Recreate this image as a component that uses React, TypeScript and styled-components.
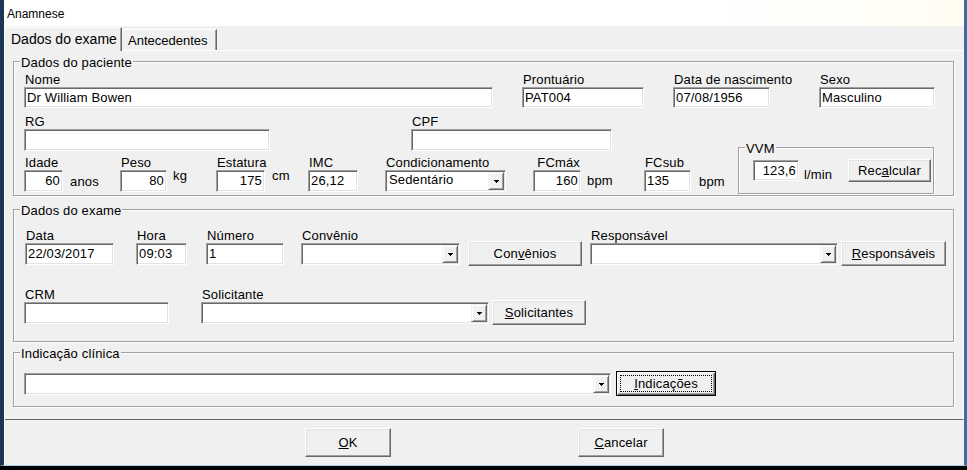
import styled, { createGlobalStyle } from 'styled-components';

const GlobalStyle = createGlobalStyle`
  html, body {
    margin: 0;
    padding: 0;
    background: #000;
  }
  * {
    box-sizing: border-box;
  }
`;

const Screen = styled.div`
  width: 967px;
  height: 470px;
  overflow: hidden;
  background: #000;
  font-family: 'Liberation Sans', Arial, sans-serif;
  font-size: 13px;
  letter-spacing: 0.15px;
  color: #000;
`;

const Window = styled.div`
  display: flex;
  flex-direction: column;
  width: 967px;
  height: 466px;
  background: #f0f0f0;
  border-left: 4px solid #1b3757;
  border-right: 3px solid #3a6da2;
  border-bottom: 1px solid #a6cbe9;
`;

const TitleBar = styled.div`
  flex: none;
  height: 26px;
  padding: 7px 0 0 3px;
  background: linear-gradient(90deg, #fff 75%, #fffdf2);
  font-size: 12px;
  line-height: 14px;
  letter-spacing: 0;
`;

const Body = styled.div`
  flex: 1;
  display: flex;
  flex-direction: column;
  border-left: 1px solid #fff;
`;

const TabStrip = styled.div`
  position: relative;
  z-index: 1;
  display: flex;
  align-items: flex-end;
  height: 23px;
  margin-top: 1px;
`;

interface TabProps {
  $active?: boolean;
  $w: number;
}

const Tab = styled.div<TabProps>`
  width: ${({ $w }) => $w}px;
  height: ${({ $active }) => ($active ? 24 : 21)}px;
  margin-bottom: ${({ $active }) => ($active ? -1 : 0)}px;
  padding: 3px 0 0 6px;
  font-size: ${({ $active }) => ($active ? 14 : 13)}px;
  line-height: ${({ $active }) => ($active ? 16 : 15)}px;
  letter-spacing: 0;
  white-space: nowrap;
  background: #f0f0f0;
  border-top: 1px solid #fff;
  border-right: 1px solid #696969;
  box-shadow: inset -1px 0 0 #a0a0a0;
`;

const TabPage = styled.div`
  flex: none;
  display: flex;
  flex-direction: column;
  height: 370px;
  padding: 10px 9px 0 8px;
  border-top: 1px solid #fff;
  border-right: 1px solid #fcfcfc;
  border-bottom: 1px solid #696969;
`;

interface BoxProps {
  $w?: number;
  $h?: number;
  $ml?: number;
  $mt?: number;
}

const Group = styled.div<BoxProps & { $pl?: number }>`
  flex: none;
  display: flex;
  flex-direction: column;
  width: ${({ $w }) => ($w ? `${$w}px` : 'auto')};
  height: ${({ $h }) => $h}px;
  margin-top: ${({ $mt }) => $mt ?? 0}px;
  margin-left: ${({ $ml }) => $ml ?? 0}px;
  padding-left: ${({ $pl }) => $pl ?? 10}px;
  border: 1px solid #a0a0a0;
  box-shadow: inset 1px 1px 0 #fff, 1px 1px 0 #fff;
`;

const GroupTitle = styled.div<{ $ml: number }>`
  align-self: flex-start;
  height: 15px;
  margin: -7px 0 0 ${({ $ml }) => $ml}px;
  padding: 0 1px;
  line-height: 15px;
  white-space: nowrap;
  background: #f0f0f0;
`;

const Row = styled.div<{ $mt?: number }>`
  display: flex;
  align-items: flex-start;
  margin-top: ${({ $mt }) => $mt ?? 0}px;
`;

const FieldBox = styled.div<BoxProps>`
  flex: none;
  display: flex;
  flex-direction: column;
  width: ${({ $w }) => $w}px;
  margin-left: ${({ $ml }) => $ml ?? 0}px;
  margin-top: ${({ $mt }) => $mt ?? 0}px;
`;

const Label = styled.div<{ $align?: 'left' | 'right' }>`
  height: 14px;
  padding: 0 1px;
  line-height: 14px;
  white-space: nowrap;
  text-align: ${({ $align }) => $align ?? 'left'};
`;

const sunken = `
  background: #fff;
  border: 1px solid;
  border-color: #a0a0a0 #fff #fff #a0a0a0;
  box-shadow: inset 1px 1px 0 #696969, inset -1px -1px 0 #e3e3e3;
`;

const TextBox = styled.div<{ $h: number; $align?: 'left' | 'right' }>`
  ${sunken}
  height: ${({ $h }) => $h}px;
  padding: 0 2px;
  line-height: ${({ $h }) => $h - 2}px;
  text-align: ${({ $align }) => $align ?? 'left'};
  white-space: nowrap;
  overflow: hidden;
`;

const ComboBox = styled.div<{ $h: number }>`
  ${sunken}
  display: flex;
  height: ${({ $h }) => $h}px;
`;

const ComboText = styled.div`
  flex: 1;
  padding-left: 3px;
  line-height: 18px;
  white-space: nowrap;
  overflow: hidden;
`;

const ComboButton = styled.div`
  flex: none;
  display: flex;
  align-items: center;
  justify-content: center;
  width: 16px;
  margin: 1px 1px 1px 0;
  background: #f0f0f0;
  border: 1px solid;
  border-color: #f0f0f0 #696969 #696969 #f0f0f0;
  box-shadow: inset 1px 1px 0 #fff, inset -1px -1px 0 #a0a0a0;
`;

const Unit = styled.div<BoxProps>`
  flex: none;
  width: ${({ $w }) => $w}px;
  margin-left: ${({ $ml }) => $ml ?? 0}px;
  margin-top: ${({ $mt }) => $mt ?? 0}px;
  line-height: 15px;
  white-space: nowrap;
`;

const Button = styled.div<BoxProps & { $focused?: boolean }>`
  flex: none;
  display: flex;
  align-items: center;
  justify-content: center;
  width: ${({ $w }) => $w}px;
  height: ${({ $h }) => $h}px;
  margin-left: ${({ $ml }) => $ml ?? 0}px;
  margin-top: ${({ $mt }) => $mt ?? 0}px;
  padding: ${({ $focused }) => ($focused ? '3px' : '0')};
  background: #f0f0f0;
  white-space: nowrap;
  border: 1px solid;
  border-color: ${({ $focused }) =>
    $focused ? '#000' : '#fff #696969 #696969 #fff'};
  box-shadow: ${({ $focused }) =>
    $focused
      ? 'inset 1px 1px 0 #fff, inset -1px -1px 0 #696969, inset -2px -2px 0 #a0a0a0'
      : 'inset -1px -1px 0 #a0a0a0, inset 1px 1px 0 #e3e3e3'};
`;

const FocusRing = styled.span`
  flex: 1;
  align-self: stretch;
  display: flex;
  align-items: center;
  justify-content: center;
  border: 1px dotted #000;
`;

const Footer = styled.div`
  flex: 1;
  display: flex;
  justify-content: center;
  gap: 187px;
  padding-top: 8px;
`;

const Arrow = () => (
  <svg width="5" height="3" viewBox="0 0 5 3" shapeRendering="crispEdges">
    <path d="M0 0h5v1h-1v1h-1v1h-1v-1h-1v-1h-1z" fill="#000" />
  </svg>
);

interface FieldProps {
  label?: string;
  value?: string;
  w: number;
  ml?: number;
  mt?: number;
  h?: number;
  align?: 'left' | 'right';
  labelAlign?: 'left' | 'right';
  combo?: boolean;
}

const Field = ({
  label,
  value = '',
  w,
  ml,
  mt,
  h = 22,
  align,
  labelAlign,
  combo,
}: FieldProps) => (
  <FieldBox $w={w} $ml={ml} $mt={mt}>
    {label && <Label $align={labelAlign}>{label}</Label>}
    {combo ? (
      <ComboBox $h={h}>
        <ComboText>{value}</ComboText>
        <ComboButton>
          <Arrow />
        </ComboButton>
      </ComboBox>
    ) : (
      <TextBox $h={h} $align={align}>
        {value}
      </TextBox>
    )}
  </FieldBox>
);

const App = () => (
  <>
    <GlobalStyle />
    <Screen>
      <Window>
        <TitleBar>Anamnese</TitleBar>
        <Body>
          <TabStrip>
            <Tab $active $w={117}>
              Dados do exame
            </Tab>
            <Tab $w={95}>Antecedentes</Tab>
          </TabStrip>

          <TabPage>
            <Group $h={135}>
              <GroupTitle $ml={-4}>Dados do paciente</GroupTitle>
              <Row $mt={3}>
                <Field label="Nome" value="Dr William Bowen" w={469} h={21} />
                <Field label="Prontuário" value="PAT004" w={122} ml={29} h={21} />
                <Field label="Data de nascimento" value="07/08/1956" w={97} ml={29} h={21} />
                <Field label="Sexo" value="Masculino" w={116} ml={49} h={21} />
              </Row>
              <Row $mt={7}>
                <Field label="RG" w={246} />
                <Field label="CPF" w={201} ml={141} />
              </Row>
              <Row $mt={5}>
                <Field label="Idade" value="60" w={39} align="right" />
                <Unit $w={40} $ml={7} $mt={18}>anos</Unit>
                <Field label="Peso" value="80" w={47} ml={10} align="right" />
                <Unit $w={37} $ml={6} $mt={12}>kg</Unit>
                <Field label="Estatura" value="175" w={49} ml={6} align="right" />
                <Unit $w={29} $ml={7} $mt={12}>cm</Unit>
                <Field label="IMC" value="26,12" w={50} ml={7} />
                <Field label="Condicionamento" value="Sedentário" w={121} ml={27} combo />
                <Field label="FCmáx" value="160" w={48} ml={27} align="right" labelAlign="right" />
                <Unit $w={52} $ml={6} $mt={17}>bpm</Unit>
                <Field label="FCsub" value="135" w={47} ml={5} />
                <Unit $w={30} $ml={8} $mt={18}>bpm</Unit>
                <Group $h={47} $w={196} $ml={9} $mt={-9} $pl={14}>
                  <GroupTitle $ml={-8}>VVM</GroupTitle>
                  <Row>
                    <Field value="123,6" w={46} h={21} mt={4} align="right" />
                    <Unit $w={40} $ml={5} $mt={11}>l/min</Unit>
                    <Button $w={83} $h={23} $ml={4} $mt={3}>
                      Rec<u>a</u>lcular
                    </Button>
                  </Row>
                </Group>
              </Row>
            </Group>

            <Group $h={133} $mt={13}>
              <GroupTitle $ml={-4}>Dados do exame</GroupTitle>
              <Row $mt={11}>
                <Field label="Data" value="22/03/2017" w={89} ml={1} />
                <Field label="Hora" value="09:03" w={51} ml={22} />
                <Field label="Número" value="1" w={78} ml={19} />
                <Field label="Convênio" w={159} ml={17} combo />
                <Button $w={114} $h={25} $ml={8} $mt={12}>
                  Con<u>v</u>ênios
                </Button>
                <Field label="Responsável" w={248} ml={8} combo />
                <Button $w={105} $h={25} $ml={3} $mt={12}>
                  <u>R</u>esponsáveis
                </Button>
              </Row>
              <Row $mt={22}>
                <Field label="CRM" w={145} />
                <Field label="Solicitante" w={288} ml={32} combo />
                <Button $w={94} $h={25} $ml={3} $mt={12}>
                  <u>S</u>olicitantes
                </Button>
              </Row>
            </Group>

            <Group $h={55} $mt={10}>
              <GroupTitle $ml={-4}>Indicação clínica</GroupTitle>
              <Row>
                <Field w={587} mt={12} combo />
                <Button $w={100} $h={25} $ml={5} $mt={10} $focused>
                  <FocusRing>
                    <u>I</u>ndicações
                  </FocusRing>
                </Button>
              </Row>
            </Group>
          </TabPage>

          <Footer>
            <Button $w={86} $h={29}>
              <u>O</u>K
            </Button>
            <Button $w={86} $h={29}>
              <u>C</u>ancelar
            </Button>
          </Footer>
        </Body>
      </Window>
    </Screen>
  </>
);

export default App;
